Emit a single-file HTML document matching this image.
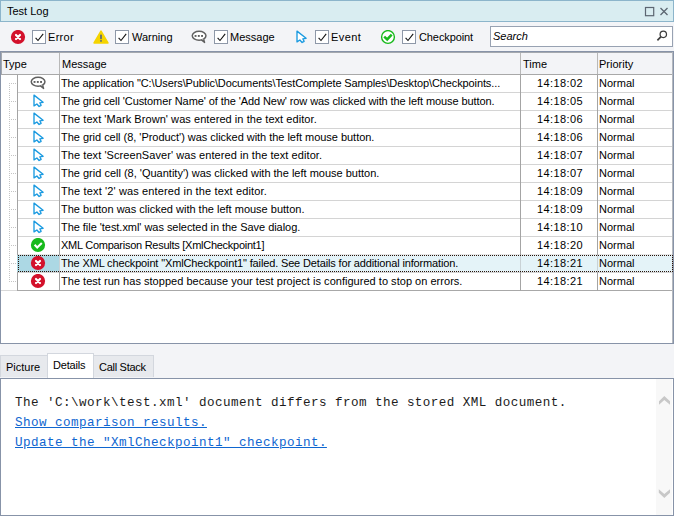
<!DOCTYPE html>
<html><head><meta charset="utf-8">
<style>
*{margin:0;padding:0;box-sizing:border-box}
html,body{width:674px;height:516px;overflow:hidden;background:#f3f4f7;font-family:"Liberation Sans",sans-serif;font-size:11px;color:#000}
.a{position:absolute}
.t{position:absolute;white-space:pre;line-height:18px;height:18px}
.cb{position:absolute;width:14px;height:14px;border:1px solid #8e98a8;background:#fff}
.cb svg{position:absolute;left:0;top:0}
.ic{position:absolute;width:16px;height:16px}
.ic svg{display:block}
.rl{position:absolute;left:17px;width:656px;height:1px;background:#d4d4d4}
.msg{letter-spacing:-0.12px}
</style></head><body>

<div class="a" style="left:0;top:0;width:674px;height:22px;background:#d9edf1;border:1px solid #8cb5cb"></div>
<div class="t" style="left:7px;top:2px">Test Log</div>
<svg class="a" style="left:644px;top:6px" width="26" height="12" viewBox="0 0 26 12"><rect x="1.5" y="1.5" width="8.2" height="8.2" fill="none" stroke="#5c6672" stroke-width="1.2"/><path d="M16.5 2 L23.5 9 M23.5 2 L16.5 9" stroke="#5c6672" stroke-width="1.3"/></svg>
<div class="ic" style="left:10px;top:30px"><svg width="16" height="16" viewBox="0 0 16 16"><circle cx="8" cy="7" r="7.1" fill="#d3112b"/><path d="M6 5 L10 9 M10 5 L6 9" stroke="#fff" stroke-width="2.2" stroke-linecap="round"/></svg></div>
<div class="cb" style="left:32px;top:30px"><svg width="13" height="13" viewBox="0 0 13 13"><path d="M2.6 6.8 L5 9.5 L10.2 2.9" fill="none" stroke="#111" stroke-width="1.1"/></svg></div>
<div class="t" style="left:48px;top:28px;letter-spacing:0.3px">Error</div>
<div class="ic" style="left:93px;top:30px"><svg width="16" height="16" viewBox="0 0 16 16"><path d="M8 1.2 L14.9 13 L1.1 13 Z" fill="#f5d400" stroke="#f5d400" stroke-width="1.6" stroke-linejoin="round"/><rect x="7.1" y="4.6" width="1.8" height="4.6" rx="0.6" fill="#5e6b7e"/><rect x="7.1" y="10.1" width="1.8" height="1.6" rx="0.5" fill="#5e6b7e"/></svg></div>
<div class="cb" style="left:115px;top:30px"><svg width="13" height="13" viewBox="0 0 13 13"><path d="M2.6 6.8 L5 9.5 L10.2 2.9" fill="none" stroke="#111" stroke-width="1.1"/></svg></div>
<div class="t" style="left:132px;top:28px;letter-spacing:0px">Warning</div>
<div class="ic" style="left:191px;top:30px"><svg width="16" height="16" viewBox="0 0 16 16"><ellipse cx="8.1" cy="5.75" rx="6.85" ry="4.45" fill="#fff" stroke="#606060" stroke-width="1.5"/><path d="M10.2 9.6 L13.6 12.4 L12.6 9.2" fill="#fff" stroke="#606060" stroke-width="1.4" stroke-linejoin="round"/><rect x="3.6" y="5" width="1.9" height="1.9" fill="#606060"/><rect x="6.85" y="5" width="1.9" height="1.9" fill="#606060"/><rect x="10.1" y="5" width="1.9" height="1.9" fill="#606060"/></svg></div>
<div class="cb" style="left:214px;top:30px"><svg width="13" height="13" viewBox="0 0 13 13"><path d="M2.6 6.8 L5 9.5 L10.2 2.9" fill="none" stroke="#111" stroke-width="1.1"/></svg></div>
<div class="t" style="left:230px;top:28px;letter-spacing:0px">Message</div>
<div class="ic" style="left:293px;top:30px"><svg width="16" height="16" viewBox="0 0 16 16"><path d="M4 1.1 L4 11.9 L6.9 10 L9.1 12.5 L11.1 11.3 L9.8 8.8 L13.1 8.3 Z" fill="#fff" stroke="#1a9ae0" stroke-width="1.35" stroke-linejoin="round"/></svg></div>
<div class="cb" style="left:315px;top:30px"><svg width="13" height="13" viewBox="0 0 13 13"><path d="M2.6 6.8 L5 9.5 L10.2 2.9" fill="none" stroke="#111" stroke-width="1.1"/></svg></div>
<div class="t" style="left:331px;top:28px;letter-spacing:0.4px">Event</div>
<div class="ic" style="left:380px;top:30px"><svg width="16" height="16" viewBox="0 0 16 16"><circle cx="8" cy="7" r="6.4" fill="#fff" stroke="#17b91b" stroke-width="1.4"/><path d="M4.2 6.6 L7.2 9.4 L11.7 4.6" fill="none" stroke="#17b91b" stroke-width="2.5"/></svg></div>
<div class="cb" style="left:402px;top:30px"><svg width="13" height="13" viewBox="0 0 13 13"><path d="M2.6 6.8 L5 9.5 L10.2 2.9" fill="none" stroke="#111" stroke-width="1.1"/></svg></div>
<div class="t" style="left:419px;top:28px;letter-spacing:-0.1px">Checkpoint</div>
<div class="a" style="left:490px;top:26px;width:183px;height:21px;border:1px solid #98a2b2;background:#fff"></div>
<div class="t" style="left:493px;top:27px;font-style:italic">Search</div>
<svg class="a" style="left:655px;top:29px" width="14" height="14" viewBox="0 0 14 14"><circle cx="8.3" cy="5.3" r="3.2" fill="none" stroke="#3c3c3c" stroke-width="1.25"/><path d="M6 7.6 L2.4 11.4" stroke="#3c3c3c" stroke-width="1.6"/></svg>
<div class="a" style="left:0;top:51px;width:674px;height:293px;background:#fff;border:1px solid #8793a8"></div>
<div class="a" style="left:1px;top:52px;width:672px;height:22px;background:#f3f4f7;border-top:1px solid #a4a8ae;border-left:1px solid #a4a8ae"></div>
<div class="a" style="left:1px;top:74px;width:672px;height:1px;background:#a8a8a8"></div>
<div class="a" style="left:59px;top:53px;width:1px;height:21px;background:#b8b8b8"></div>
<div class="a" style="left:520px;top:53px;width:1px;height:21px;background:#b8b8b8"></div>
<div class="a" style="left:597px;top:53px;width:1px;height:21px;background:#b8b8b8"></div>
<div class="t" style="left:3px;top:55px">Type</div>
<div class="t" style="left:62px;top:55px">Message</div>
<div class="t" style="left:523px;top:55px">Time</div>
<div class="t" style="left:599px;top:55px">Priority</div>
<div class="ic" style="left:30px;top:76px"><svg width="16" height="16" viewBox="0 0 16 16"><ellipse cx="8.1" cy="5.75" rx="6.85" ry="4.45" fill="#fff" stroke="#606060" stroke-width="1.5"/><path d="M10.2 9.6 L13.6 12.4 L12.6 9.2" fill="#fff" stroke="#606060" stroke-width="1.4" stroke-linejoin="round"/><rect x="3.6" y="5" width="1.9" height="1.9" fill="#606060"/><rect x="6.85" y="5" width="1.9" height="1.9" fill="#606060"/><rect x="10.1" y="5" width="1.9" height="1.9" fill="#606060"/></svg></div>
<div class="t" style="left:61px;top:74px;letter-spacing:-0.108px">The application &quot;C:\Users\Public\Documents\TestComplete Samples\Desktop\Checkpoints...</div>
<div class="t" style="left:537px;top:74px;letter-spacing:0.4px">14:18:02</div>
<div class="t" style="left:599px;top:74px">Normal</div>
<div class="rl" style="top:92px;background:#d4d4d4"></div>
<div class="a" style="left:9px;top:83px;width:8px;height:1px;background:repeating-linear-gradient(90deg,#c4c4c4 0 1px,transparent 1px 2px)"></div>
<div class="ic" style="left:30px;top:94px"><svg width="16" height="16" viewBox="0 0 16 16"><path d="M4 1.1 L4 11.9 L6.9 10 L9.1 12.5 L11.1 11.3 L9.8 8.8 L13.1 8.3 Z" fill="#fff" stroke="#1a9ae0" stroke-width="1.35" stroke-linejoin="round"/></svg></div>
<div class="t" style="left:61px;top:92px;letter-spacing:-0.086px">The grid cell &#x27;Customer Name&#x27; of the &#x27;Add New&#x27; row was clicked with the left mouse button.</div>
<div class="t" style="left:537px;top:92px;letter-spacing:0.4px">14:18:05</div>
<div class="t" style="left:599px;top:92px">Normal</div>
<div class="rl" style="top:110px;background:#d4d4d4"></div>
<div class="a" style="left:9px;top:101px;width:8px;height:1px;background:repeating-linear-gradient(90deg,#c4c4c4 0 1px,transparent 1px 2px)"></div>
<div class="ic" style="left:30px;top:112px"><svg width="16" height="16" viewBox="0 0 16 16"><path d="M4 1.1 L4 11.9 L6.9 10 L9.1 12.5 L11.1 11.3 L9.8 8.8 L13.1 8.3 Z" fill="#fff" stroke="#1a9ae0" stroke-width="1.35" stroke-linejoin="round"/></svg></div>
<div class="t" style="left:61px;top:110px;letter-spacing:0.063px">The text &#x27;Mark Brown&#x27; was entered in the text editor.</div>
<div class="t" style="left:537px;top:110px;letter-spacing:0.4px">14:18:06</div>
<div class="t" style="left:599px;top:110px">Normal</div>
<div class="rl" style="top:128px;background:#d4d4d4"></div>
<div class="a" style="left:9px;top:119px;width:8px;height:1px;background:repeating-linear-gradient(90deg,#c4c4c4 0 1px,transparent 1px 2px)"></div>
<div class="ic" style="left:30px;top:130px"><svg width="16" height="16" viewBox="0 0 16 16"><path d="M4 1.1 L4 11.9 L6.9 10 L9.1 12.5 L11.1 11.3 L9.8 8.8 L13.1 8.3 Z" fill="#fff" stroke="#1a9ae0" stroke-width="1.35" stroke-linejoin="round"/></svg></div>
<div class="t" style="left:61px;top:128px;letter-spacing:-0.030px">The grid cell (8, &#x27;Product&#x27;) was clicked with the left mouse button.</div>
<div class="t" style="left:537px;top:128px;letter-spacing:0.4px">14:18:06</div>
<div class="t" style="left:599px;top:128px">Normal</div>
<div class="rl" style="top:146px;background:#d4d4d4"></div>
<div class="a" style="left:9px;top:137px;width:8px;height:1px;background:repeating-linear-gradient(90deg,#c4c4c4 0 1px,transparent 1px 2px)"></div>
<div class="ic" style="left:30px;top:148px"><svg width="16" height="16" viewBox="0 0 16 16"><path d="M4 1.1 L4 11.9 L6.9 10 L9.1 12.5 L11.1 11.3 L9.8 8.8 L13.1 8.3 Z" fill="#fff" stroke="#1a9ae0" stroke-width="1.35" stroke-linejoin="round"/></svg></div>
<div class="t" style="left:61px;top:146px;letter-spacing:0.069px">The text &#x27;ScreenSaver&#x27; was entered in the text editor.</div>
<div class="t" style="left:537px;top:146px;letter-spacing:0.4px">14:18:07</div>
<div class="t" style="left:599px;top:146px">Normal</div>
<div class="rl" style="top:164px;background:#d4d4d4"></div>
<div class="a" style="left:9px;top:155px;width:8px;height:1px;background:repeating-linear-gradient(90deg,#c4c4c4 0 1px,transparent 1px 2px)"></div>
<div class="ic" style="left:30px;top:166px"><svg width="16" height="16" viewBox="0 0 16 16"><path d="M4 1.1 L4 11.9 L6.9 10 L9.1 12.5 L11.1 11.3 L9.8 8.8 L13.1 8.3 Z" fill="#fff" stroke="#1a9ae0" stroke-width="1.35" stroke-linejoin="round"/></svg></div>
<div class="t" style="left:61px;top:164px;letter-spacing:-0.002px">The grid cell (8, &#x27;Quantity&#x27;) was clicked with the left mouse button.</div>
<div class="t" style="left:537px;top:164px;letter-spacing:0.4px">14:18:07</div>
<div class="t" style="left:599px;top:164px">Normal</div>
<div class="rl" style="top:182px;background:#d4d4d4"></div>
<div class="a" style="left:9px;top:173px;width:8px;height:1px;background:repeating-linear-gradient(90deg,#c4c4c4 0 1px,transparent 1px 2px)"></div>
<div class="ic" style="left:30px;top:184px"><svg width="16" height="16" viewBox="0 0 16 16"><path d="M4 1.1 L4 11.9 L6.9 10 L9.1 12.5 L11.1 11.3 L9.8 8.8 L13.1 8.3 Z" fill="#fff" stroke="#1a9ae0" stroke-width="1.35" stroke-linejoin="round"/></svg></div>
<div class="t" style="left:61px;top:182px;letter-spacing:0.136px">The text &#x27;2&#x27; was entered in the text editor.</div>
<div class="t" style="left:537px;top:182px;letter-spacing:0.4px">14:18:09</div>
<div class="t" style="left:599px;top:182px">Normal</div>
<div class="rl" style="top:200px;background:#d4d4d4"></div>
<div class="a" style="left:9px;top:191px;width:8px;height:1px;background:repeating-linear-gradient(90deg,#c4c4c4 0 1px,transparent 1px 2px)"></div>
<div class="ic" style="left:30px;top:202px"><svg width="16" height="16" viewBox="0 0 16 16"><path d="M4 1.1 L4 11.9 L6.9 10 L9.1 12.5 L11.1 11.3 L9.8 8.8 L13.1 8.3 Z" fill="#fff" stroke="#1a9ae0" stroke-width="1.35" stroke-linejoin="round"/></svg></div>
<div class="t" style="left:61px;top:200px;letter-spacing:0.002px">The button was clicked with the left mouse button.</div>
<div class="t" style="left:537px;top:200px;letter-spacing:0.4px">14:18:09</div>
<div class="t" style="left:599px;top:200px">Normal</div>
<div class="rl" style="top:218px;background:#d4d4d4"></div>
<div class="a" style="left:9px;top:209px;width:8px;height:1px;background:repeating-linear-gradient(90deg,#c4c4c4 0 1px,transparent 1px 2px)"></div>
<div class="ic" style="left:30px;top:220px"><svg width="16" height="16" viewBox="0 0 16 16"><path d="M4 1.1 L4 11.9 L6.9 10 L9.1 12.5 L11.1 11.3 L9.8 8.8 L13.1 8.3 Z" fill="#fff" stroke="#1a9ae0" stroke-width="1.35" stroke-linejoin="round"/></svg></div>
<div class="t" style="left:61px;top:218px;letter-spacing:-0.042px">The file &#x27;test.xml&#x27; was selected in the Save dialog.</div>
<div class="t" style="left:537px;top:218px;letter-spacing:0.4px">14:18:10</div>
<div class="t" style="left:599px;top:218px">Normal</div>
<div class="rl" style="top:236px;background:#d4d4d4"></div>
<div class="a" style="left:9px;top:227px;width:8px;height:1px;background:repeating-linear-gradient(90deg,#c4c4c4 0 1px,transparent 1px 2px)"></div>
<div class="ic" style="left:30px;top:238px"><svg width="16" height="16" viewBox="0 0 16 16"><circle cx="8" cy="7" r="7.1" fill="#17b91b"/><path d="M4.6 6.8 L7.2 9.4 L11.8 4.9" fill="none" stroke="#fff" stroke-width="2.1"/></svg></div>
<div class="t" style="left:61px;top:236px;letter-spacing:-0.265px">XML Comparison Results [XmlCheckpoint1]</div>
<div class="t" style="left:537px;top:236px;letter-spacing:0.4px">14:18:20</div>
<div class="t" style="left:599px;top:236px">Normal</div>
<div class="rl" style="top:254px;background:#e6e6e6"></div>
<div class="a" style="left:9px;top:245px;width:8px;height:1px;background:repeating-linear-gradient(90deg,#c4c4c4 0 1px,transparent 1px 2px)"></div>
<div class="a" style="left:17px;top:255px;width:42px;height:17px;background:#acd8e4"></div>
<div class="a" style="left:59px;top:255px;width:613px;height:17px;background:#e4f3f8"></div>
<div class="ic" style="left:30px;top:256px"><svg width="16" height="16" viewBox="0 0 16 16"><circle cx="8" cy="7" r="7.1" fill="#d3112b"/><path d="M6 5 L10 9 M10 5 L6 9" stroke="#fff" stroke-width="2.2" stroke-linecap="round"/></svg></div>
<div class="t" style="left:61px;top:254px;letter-spacing:-0.144px">The XML checkpoint &quot;XmlCheckpoint1&quot; failed. See Details for additional information.</div>
<div class="t" style="left:537px;top:254px;letter-spacing:0.4px">14:18:21</div>
<div class="t" style="left:599px;top:254px">Normal</div>
<div class="rl" style="top:272px;background:#d4d4d4"></div>
<div class="a" style="left:9px;top:263px;width:8px;height:1px;background:repeating-linear-gradient(90deg,#c4c4c4 0 1px,transparent 1px 2px)"></div>
<div class="ic" style="left:30px;top:274px"><svg width="16" height="16" viewBox="0 0 16 16"><circle cx="8" cy="7" r="7.1" fill="#d3112b"/><path d="M6 5 L10 9 M10 5 L6 9" stroke="#fff" stroke-width="2.2" stroke-linecap="round"/></svg></div>
<div class="t" style="left:61px;top:272px;letter-spacing:0.026px">The test run has stopped because your test project is configured to stop on errors.</div>
<div class="t" style="left:537px;top:272px;letter-spacing:0.4px">14:18:21</div>
<div class="t" style="left:599px;top:272px">Normal</div>
<div class="rl" style="top:290px;background:#a8a8a8"></div>
<div class="a" style="left:9px;top:281px;width:8px;height:1px;background:repeating-linear-gradient(90deg,#c4c4c4 0 1px,transparent 1px 2px)"></div>
<div class="a" style="left:1px;top:290px;width:16px;height:1px;background:#d8d8d8"></div>
<div class="a" style="left:9px;top:83px;width:1px;height:199px;background:repeating-linear-gradient(180deg,#c4c4c4 0 1px,transparent 1px 2px)"></div>
<div class="a" style="left:17px;top:75px;width:1px;height:180px;background:#a4a4a4"></div>
<div class="a" style="left:17px;top:272px;width:1px;height:19px;background:#a4a4a4"></div>
<div class="a" style="left:59px;top:75px;width:1px;height:180px;background:#a4a4a4"></div>
<div class="a" style="left:59px;top:272px;width:1px;height:19px;background:#a4a4a4"></div>
<div class="a" style="left:59px;top:255px;width:1px;height:17px;background:#c9d2d6"></div>
<div class="a" style="left:520px;top:75px;width:1px;height:180px;background:#a4a4a4"></div>
<div class="a" style="left:520px;top:272px;width:1px;height:19px;background:#a4a4a4"></div>
<div class="a" style="left:520px;top:255px;width:1px;height:17px;background:#c9d2d6"></div>
<div class="a" style="left:597px;top:75px;width:1px;height:180px;background:#a4a4a4"></div>
<div class="a" style="left:597px;top:272px;width:1px;height:19px;background:#a4a4a4"></div>
<div class="a" style="left:597px;top:255px;width:1px;height:17px;background:#c9d2d6"></div>
<div class="a" style="left:672px;top:52px;width:1px;height:291px;background:#b4b8be"></div>
<div class="a" style="left:18px;top:255px;width:655px;height:17px;border:1px dotted #2a1208"></div>
<div class="a" style="left:0;top:355px;width:48px;height:22px;background:#e7e9ed;border:1px solid #d3d7de;border-bottom:none"></div>
<div class="a" style="left:47px;top:353px;width:47px;height:25px;background:#fff;border:1px solid #d3d7de;border-bottom:none"></div>
<div class="a" style="left:93px;top:355px;width:61px;height:22px;background:#e7e9ed;border:1px solid #d3d7de;border-bottom:none"></div>
<div class="t" style="left:6px;top:358px">Picture</div>
<div class="t" style="left:53px;top:356px;letter-spacing:-0.17px">Details</div>
<div class="t" style="left:99px;top:358px;letter-spacing:-0.28px">Call Stack</div>
<div class="a" style="left:0;top:378px;width:674px;height:138px;background:#fff;border:1px solid #8793a8"></div>
<div class="a" style="left:656px;top:379px;width:16px;height:136px;background:#f8f8f8"></div>
<svg class="a" style="left:656px;top:390px" width="16" height="20" viewBox="0 0 16 20"><path d="M3 11.3 L8.3 5.9 L14 11.3 L14 14.7 L8.3 10 L3 14.7 Z" fill="#c8c8c8"/></svg>
<svg class="a" style="left:656px;top:482px" width="16" height="20" viewBox="0 0 16 20"><path d="M2.8 7.2 L2.8 10.8 L8.3 16.1 L14 10.8 L14 7.2 L8.3 12 Z" fill="#c8c8c8"/></svg>
<div class="t" style="left:15px;top:393px;font-family:'Liberation Mono',monospace;font-size:12.6px;letter-spacing:0.44px;line-height:20px;height:20px;color:#1c1c1c">The 'C:\work\test.xml' document differs from the stored XML document.</div>
<div class="t" style="left:15px;top:413px;font-family:'Liberation Mono',monospace;font-size:12.6px;letter-spacing:0.44px;line-height:20px;height:20px;color:#0f66d0;text-decoration:underline">Show comparison results.</div>
<div class="t" style="left:15px;top:433px;font-family:'Liberation Mono',monospace;font-size:12.6px;letter-spacing:0.44px;line-height:20px;height:20px;color:#0f66d0;text-decoration:underline">Update the "XmlCheckpoint1" checkpoint.</div>
</body></html>
